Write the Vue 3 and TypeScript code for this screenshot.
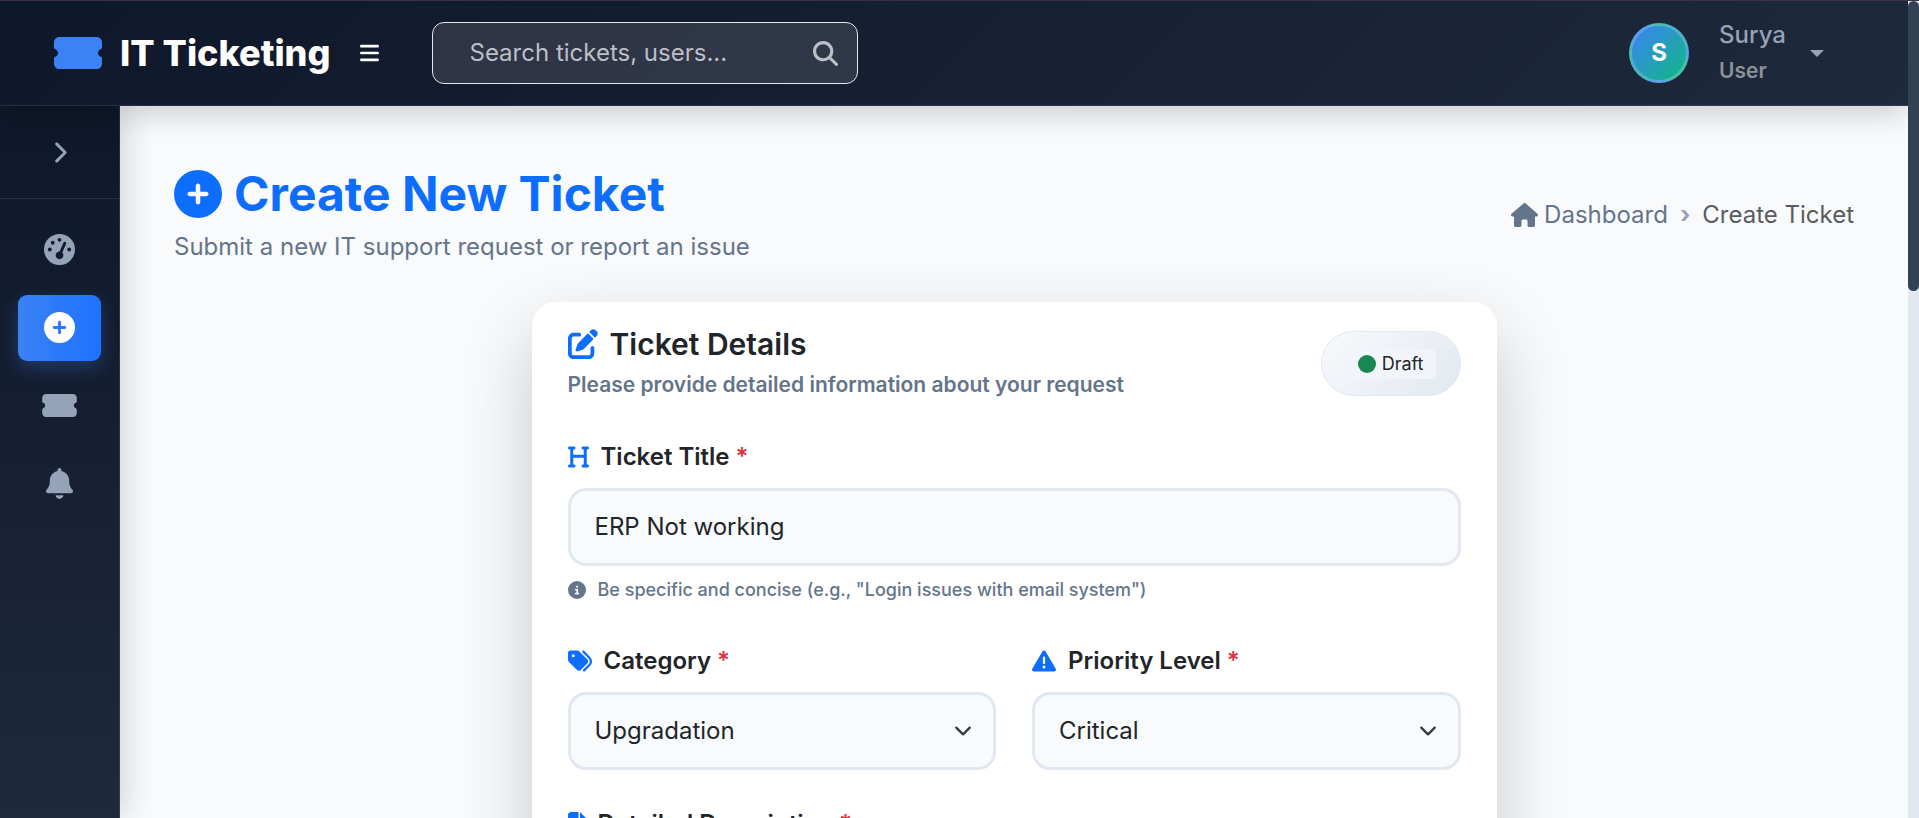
<script setup lang="ts">
import { ref } from 'vue'

interface Icon {
  box: string
  d: string
}

const icons: Record<string, Icon> = {
  ticket: {
    box: '0 64 576 384',
    d: 'M64 64C28.7 64 0 92.7 0 128v64c0 8.8 7.4 15.7 15.7 18.6C34.5 217.1 48 235 48 256s-13.5 38.9-32.3 45.4C7.4 304.3 0 311.2 0 320v64c0 35.3 28.7 64 64 64H512c35.3 0 64-28.7 64-64V320c0-8.8-7.4-15.7-15.7-18.6C541.5 294.9 528 277 528 256s13.5-38.9 32.3-45.4c8.3-2.9 15.7-9.8 15.7-18.6V128c0-35.3-28.7-64-64-64H64z',
  },
  bars: {
    box: '0 0 448 512',
    d: 'M0 96C0 78.3 14.3 64 32 64H416c17.7 0 32 14.3 32 32s-14.3 32-32 32H32C14.3 128 0 113.7 0 96zM0 256c0-17.7 14.3-32 32-32H416c17.7 0 32 14.3 32 32s-14.3 32-32 32H32c-17.7 0-32-14.3-32-32zM448 416c0 17.7-14.3 32-32 32H32c-17.7 0-32-14.3-32-32s14.3-32 32-32H416c17.7 0 32 14.3 32 32z',
  },
  search: {
    box: '0 0 512 512',
    d: 'M416 208c0 45.9-14.9 88.3-40 122.7L502.6 457.4c12.5 12.5 12.5 32.8 0 45.3s-32.8 12.5-45.3 0L330.7 376c-34.4 25.2-76.8 40-122.7 40C93.1 416 0 322.9 0 208S93.1 0 208 0S416 93.1 416 208zM208 352a144 144 0 1 0 0-288 144 144 0 1 0 0 288z',
  },
  plus: {
    box: '0 0 512 512',
    d: 'M256 512A256 256 0 1 0 256 0a256 256 0 1 0 0 512zM232 344V280H168c-13.3 0-24-10.7-24-24s10.7-24 24-24h64V168c0-13.3 10.7-24 24-24s24 10.7 24 24v64h64c13.3 0 24 10.7 24 24s-10.7 24-24 24H280v64c0 13.3-10.7 24-24 24s-24-10.7-24-24z',
  },
  gauge: {
    box: '0 0 512 512',
    d: 'M0 256a256 256 0 1 1 512 0A256 256 0 1 1 0 256zM288 96a32 32 0 1 0 -64 0 32 32 0 1 0 64 0zM256 416c35.3 0 64-28.7 64-64c0-17.4-6.9-33.1-18.1-44.6L366 161.7c5.3-12.1-.2-26.3-12.3-31.6s-26.3 .2-31.6 12.3L257.9 288c-.6 0-1.3 0-1.9 0c-35.3 0-64 28.7-64 64s28.7 64 64 64zM176 144a32 32 0 1 0 -64 0 32 32 0 1 0 64 0zM96 288a32 32 0 1 0 0-64 32 32 0 1 0 0 64zm352-32a32 32 0 1 0 -64 0 32 32 0 1 0 64 0z',
  },
  bell: {
    box: '0 0 448 512',
    d: 'M224 0c-17.7 0-32 14.3-32 32V51.2C119 66 64 130.6 64 208v18.8c0 47-17.3 92.4-48.5 127.6l-7.4 8.3c-8.4 9.4-10.4 22.9-5.3 34.4S19.4 416 32 416H416c12.6 0 24-7.4 29.2-18.9s3.1-25-5.3-34.4l-7.4-8.3C401.3 319.2 384 273.9 384 226.8V208c0-77.4-55-142-128-156.8V32c0-17.7-14.3-32-32-32zm45.3 493.3c12-12 18.7-28.3 18.7-45.3H224 160c0 17 6.7 33.3 18.7 45.3s28.3 18.7 45.3 18.7s33.3-6.7 45.3-18.7z',
  },
  chevron: {
    box: '0 0 320 512',
    d: 'M310.6 233.4c12.5 12.5 12.5 32.8 0 45.3l-192 192c-12.5 12.5-32.8 12.5-45.3 0s-12.5-32.8 0-45.3L242.7 256 73.4 86.6c-12.5-12.5-12.5-32.8 0-45.3s32.8-12.5 45.3 0l192 192z',
  },
  home: {
    box: '0 0 576 512',
    d: 'M575.8 255.5c0 18-15 32.1-32 32.1h-32l.7 160.2c0 2.7-.2 5.4-.5 8.1V472c0 22.1-17.9 40-40 40H456c-1.1 0-2.2 0-3.3-.1c-1.4 .1-2.8 .1-4.2 .1H416 392c-22.1 0-40-17.9-40-40V448 384c0-17.7-14.3-32-32-32H256c-17.7 0-32 14.3-32 32v64 24c0 22.1-17.9 40-40 40H160 128.1c-1.5 0-3-.1-4.5-.2c-1.2 .1-2.4 .2-3.6 .2H104c-22.1 0-40-17.9-40-40V360c0-.9 0-1.9 .1-2.8V287.6H32c-18 0-32-14-32-32.1c0-9 3-17 10-24L266.4 8c7-7 15-8 22-8s15 2 21 7L564.8 231.5c8 7 12 15 11 24z',
  },
  edit: {
    box: '0 0 512 512',
    d: 'M471.6 21.7c-21.9-21.9-57.3-21.9-79.2 0L362.3 51.7l97.9 97.9 30.1-30.1c21.9-21.9 21.9-57.3 0-79.2L471.6 21.7zm-299.2 220c-6.1 6.1-10.8 13.6-13.5 21.9l-29.6 88.8c-2.9 8.6-.6 18.1 5.8 24.6s15.9 8.7 24.6 5.8l88.8-29.6c8.2-2.7 15.7-7.4 21.9-13.5L437.7 172.3 339.7 74.3 172.4 241.7zM96 64C43 64 0 107 0 160V416c0 53 43 96 96 96H352c53 0 96-43 96-96V320c0-17.7-14.3-32-32-32s-32 14.3-32 32v96c0 17.7-14.3 32-32 32H96c-17.7 0-32-14.3-32-32V160c0-17.7 14.3-32 32-32h96c17.7 0 32-14.3 32-32s-14.3-32-32-32H96z',
  },
  heading: {
    box: '0 0 448 512',
    d: 'M0 64C0 46.3 14.3 32 32 32H80h48c17.7 0 32 14.3 32 32s-14.3 32-32 32H112V208H336V96H320c-17.7 0-32-14.3-32-32s14.3-32 32-32h48 48c17.7 0 32 14.3 32 32s-14.3 32-32 32H400V240 416h16c17.7 0 32 14.3 32 32s-14.3 32-32 32H368 320c-17.7 0-32-14.3-32-32s14.3-32 32-32h16V272H112V416h16c17.7 0 32 14.3 32 32s-14.3 32-32 32H80 32c-17.7 0-32-14.3-32-32s14.3-32 32-32H48V240 96H32C14.3 96 0 81.7 0 64z',
  },
  info: {
    box: '0 0 512 512',
    d: 'M256 512A256 256 0 1 0 256 0a256 256 0 1 0 0 512zM216 336h24V272H216c-13.3 0-24-10.7-24-24s10.7-24 24-24h48c13.3 0 24 10.7 24 24v88h8c13.3 0 24 10.7 24 24s-10.7 24-24 24H216c-13.3 0-24-10.7-24-24s10.7-24 24-24zm40-208a32 32 0 1 1 0 64 32 32 0 1 1 0-64z',
  },
  tags: {
    box: '0 0 512 512',
    d: 'M345 39.1L472.8 168.4c52.4 53 52.4 138.2 0 191.2L360.8 472.9c-9.3 9.4-24.5 9.5-33.9 .2s-9.5-24.5-.2-33.9L438.6 325.9c33.9-34.3 33.9-89.4 0-123.7L310.9 72.9c-9.3-9.4-9.2-24.6 .2-33.9s24.6-9.2 33.9 .2zM0 229.5V80C0 53.5 21.5 32 48 32H197.5c17 0 33.3 6.7 45.3 18.7l168 168c25 25 25 65.5 0 90.5L277.3 442.7c-25 25-65.5 25-90.5 0l-168-168C6.7 262.7 0 246.5 0 229.5zM144 144a32 32 0 1 0 -64 0 32 32 0 1 0 64 0z',
  },
  warning: {
    box: '0 0 512 512',
    d: 'M256 32c14.2 0 27.3 7.5 34.5 19.8l216 368c7.3 12.4 7.3 27.7 .2 40.1S486.3 480 472 480H40c-14.3 0-27.6-7.7-34.7-20.1s-7-27.8 .2-40.1l216-368C228.7 39.5 241.8 32 256 32zm0 128c-13.3 0-24 10.7-24 24V296c0 13.3 10.7 24 24 24s24-10.7 24-24V184c0-13.3-10.7-24-24-24zm32 224a32 32 0 1 0 -64 0 32 32 0 1 0 64 0z',
  },
  file: {
    box: '0 0 384 512',
    d: 'M64 0C28.7 0 0 28.7 0 64V448c0 35.3 28.7 64 64 64H320c35.3 0 64-28.7 64-64V160H256c-17.7 0-32-14.3-32-32V0H64zM256 0V128H384L256 0zM112 256H272c8.8 0 16 7.2 16 16s-7.2 16-16 16H112c-8.8 0-16-7.2-16-16s7.2-16 16-16zm0 64H272c8.8 0 16 7.2 16 16s-7.2 16-16 16H112c-8.8 0-16-7.2-16-16s7.2-16 16-16zm0 64H272c8.8 0 16 7.2 16 16s-7.2 16-16 16H112c-8.8 0-16-7.2-16-16s7.2-16 16-16z',
  },
}

const navItems = [
  { icon: 'gauge', label: 'Dashboard', active: false },
  { icon: 'plus', label: 'Create Ticket', active: true },
  { icon: 'ticket', label: 'My Tickets', active: false },
  { icon: 'bell', label: 'Notifications', active: false },
]

const query = ref('')
const title = ref('ERP Not working')
const category = ref('Upgradation')
const priority = ref('Critical')
const description = ref('')
</script>

<template>
  <div class="page">
    <div class="shell">
      <header class="topbar">
        <a class="brand" href="#">
          <svg class="brand-icon" :viewBox="icons.ticket.box" aria-hidden="true"><path :d="icons.ticket.d" /></svg>
          <span class="brand-name">IT Ticketing</span>
        </a>
        <button class="menu-button" type="button" aria-label="Menu">
          <svg :viewBox="icons.bars.box" aria-hidden="true"><path :d="icons.bars.d" /></svg>
        </button>
        <form class="search" @submit.prevent>
          <input v-model="query" type="search" placeholder="Search tickets, users..." aria-label="Search tickets, users" />
          <button type="submit" aria-label="Search">
            <svg :viewBox="icons.search.box" aria-hidden="true"><path :d="icons.search.d" /></svg>
          </button>
        </form>
        <button class="profile" type="button">
          <span class="avatar">S</span>
          <span class="who">
            <span class="who-name">Surya</span>
            <span class="who-role">User</span>
          </span>
          <span class="caret"></span>
        </button>
      </header>

      <div class="body">
        <aside class="sidebar">
          <button class="expand" type="button" aria-label="Expand sidebar">
            <svg :viewBox="icons.chevron.box" aria-hidden="true"><path :d="icons.chevron.d" /></svg>
          </button>
          <nav class="nav">
            <a
              v-for="item in navItems"
              :key="item.label"
              href="#"
              :class="['nav-link', 'nav-' + item.icon, { active: item.active }]"
              :aria-label="item.label"
            >
              <svg :viewBox="icons[item.icon].box" aria-hidden="true"><path :d="icons[item.icon].d" /></svg>
            </a>
          </nav>
        </aside>

        <main class="main">
          <div class="page-head">
            <div>
              <h1>
                <svg :viewBox="icons.plus.box" aria-hidden="true"><path :d="icons.plus.d" /></svg>
                <span>Create New Ticket</span>
              </h1>
              <p>Submit a new IT support request or report an issue</p>
            </div>
            <nav class="crumbs" aria-label="Breadcrumb">
              <a href="#">
                <svg :viewBox="icons.home.box" aria-hidden="true"><path :d="icons.home.d" /></svg>
                <span>Dashboard</span>
              </a>
              <span class="crumb-sep">›</span>
              <span class="crumb-current">Create Ticket</span>
            </nav>
          </div>

          <div class="row">
            <div class="column">
              <section class="card">
                <div class="card-head">
                  <div>
                    <h2>
                      <svg :viewBox="icons.edit.box" aria-hidden="true"><path :d="icons.edit.d" /></svg>
                      <span>Ticket Details</span>
                    </h2>
                    <p>Please provide detailed information about your request</p>
                  </div>
                  <div class="status">
                    <span class="status-badge"><span class="status-dot"></span>Draft</span>
                  </div>
                </div>

                <form class="fields" @submit.prevent>
                  <div class="field">
                    <label for="ticket-title">
                      <svg class="icon-heading" :viewBox="icons.heading.box" aria-hidden="true"><path :d="icons.heading.d" /></svg>
                      <span>Ticket Title <em>*</em></span>
                    </label>
                    <input id="ticket-title" v-model="title" class="control" type="text" />
                    <p class="hint">
                      <svg :viewBox="icons.info.box" aria-hidden="true"><path :d="icons.info.d" /></svg>
                      <span>Be specific and concise (e.g., "Login issues with email system")</span>
                    </p>
                  </div>

                  <div class="pair">
                    <div class="field">
                      <label for="category">
                        <svg :viewBox="icons.tags.box" aria-hidden="true"><path :d="icons.tags.d" /></svg>
                        <span>Category <em>*</em></span>
                      </label>
                      <div class="select">
                        <select id="category" v-model="category" class="control">
                          <option>Upgradation</option>
                        </select>
                        <svg viewBox="0 0 16 16" aria-hidden="true"><path d="m2 5 6 6 6-6" /></svg>
                      </div>
                    </div>
                    <div class="field">
                      <label for="priority">
                        <svg :viewBox="icons.warning.box" aria-hidden="true"><path :d="icons.warning.d" /></svg>
                        <span>Priority Level <em>*</em></span>
                      </label>
                      <div class="select">
                        <select id="priority" v-model="priority" class="control">
                          <option>Critical</option>
                        </select>
                        <svg viewBox="0 0 16 16" aria-hidden="true"><path d="m2 5 6 6 6-6" /></svg>
                      </div>
                    </div>
                  </div>

                  <div class="field">
                    <label for="description">
                      <svg class="icon-file" :viewBox="icons.file.box" aria-hidden="true"><path :d="icons.file.d" /></svg>
                      <span>Detailed Description <em>*</em></span>
                    </label>
                    <textarea id="description" v-model="description" class="control" rows="6"></textarea>
                  </div>
                </form>
              </section>
            </div>
          </div>
        </main>
      </div>
    </div>
    <div class="scroll-track" aria-hidden="true"><div class="scroll-thumb"></div></div>
  </div>
</template>

<style>
body {
  margin: 0;
  background: #f8fafc;
}
</style>

<style scoped>
.page,
.page * {
  box-sizing: border-box;
}

.page {
  display: flex;
  height: 100vh;
  overflow: hidden;
  border-top: 1px solid #3a3147;
  font-family: Inter, 'Liberation Sans', sans-serif;
  font-size: 24px;
  line-height: 36px;
  color: #212529;
}

h1,
h2,
p {
  margin: 0;
}

button,
input,
select,
textarea {
  font: inherit;
  color: inherit;
  margin: 0;
}

button {
  padding: 0;
  border: 0;
  background: none;
  cursor: pointer;
}

a {
  color: inherit;
  text-decoration: none;
}

svg {
  display: block;
  flex: none;
  fill: currentColor;
}

.shell {
  flex: 1;
  min-width: 0;
  display: flex;
  flex-direction: column;
  overflow: hidden;
}

/* Top bar */
.topbar {
  position: relative;
  z-index: 3;
  flex: none;
  height: 105px;
  display: flex;
  align-items: center;
  padding: 0 84px 0 54px;
  background: linear-gradient(135deg, #0f172a 0%, #1e293b 100%);
  border-bottom: 1px solid rgba(255, 255, 255, 0.1);
  box-shadow: 0 6px 30px rgba(0, 0, 0, 0.2);
  color: #fff;
}

.brand {
  display: flex;
  align-items: center;
  gap: 18px;
}

.brand-icon {
  width: 48px;
  height: 32px;
  color: #3b82f6;
}

.brand-name {
  font-size: 36px;
  line-height: 54px;
  font-weight: 800;
  white-space: nowrap;
}

.menu-button {
  margin-left: 30px;
}

.menu-button svg {
  width: 19px;
  height: 22px;
}

.search {
  flex: 0 1 426px;
  min-width: 0;
  display: flex;
  align-items: center;
  height: 62px;
  margin-left: 53px;
  padding: 0 19px 0 36px;
  border: 1px solid #e2e8f0;
  border-radius: 12px;
  background: linear-gradient(135deg, #2f3346, #2f3848);
}

.search input {
  flex: 1;
  min-width: 0;
  padding: 0;
  border: 0;
  outline: 0;
  background: none;
  appearance: none;
}

.search input::placeholder {
  color: #bdbfc6;
  opacity: 1;
}

.search button {
  color: #bdbfc6;
}

.search button svg {
  width: 25px;
  height: 25px;
}

.profile {
  display: flex;
  align-items: center;
  margin-left: auto;
  text-align: left;
}

.avatar {
  display: flex;
  align-items: center;
  justify-content: center;
  width: 60px;
  height: 60px;
  margin-right: 30px;
  border: 3px solid rgba(255, 255, 255, 0.2);
  border-radius: 50%;
  background: linear-gradient(135deg, #3b82f6, #10b981);
  font-weight: 700;
}

.who {
  display: flex;
  flex-direction: column;
  font-weight: 500;
}

.who-name {
  color: #94a3b8;
}

.who-role {
  font-size: 21px;
  font-weight: 600;
  color: #8e9197;
}

.caret {
  margin-left: 24px;
  border: 7px solid transparent;
  border-top-color: #94a3b8;
  border-bottom: 0;
}

/* Sidebar */
.body {
  flex: 1;
  min-height: 0;
  display: flex;
}

.sidebar {
  position: relative;
  z-index: 2;
  flex: none;
  width: 120px;
  background: linear-gradient(180deg, #0f172a 0%, #1e293b 100%);
  border-right: 1px solid rgba(255, 255, 255, 0.1);
  box-shadow: 6px 0 30px rgba(0, 0, 0, 0.15);
  color: #94a3b8;
}

.expand {
  display: flex;
  align-items: center;
  justify-content: center;
  width: 100%;
  height: 93px;
  border-bottom: 1px solid rgba(255, 255, 255, 0.1);
}

.expand svg {
  width: 15px;
  height: 23px;
}

.nav {
  display: flex;
  flex-direction: column;
  gap: 12px;
  padding: 18px;
}

.nav-link {
  display: flex;
  align-items: center;
  justify-content: center;
  height: 66px;
  padding-bottom: 2px;
  border-radius: 9px;
}

.nav-link.active {
  background: linear-gradient(90deg, #3b82f6, #1d72ff);
  box-shadow: 0 6px 18px rgba(59, 130, 246, 0.3);
  color: #fff;
}

.nav-link svg {
  width: 31px;
  height: 31px;
}

.nav-ticket svg {
  width: 35px;
  height: 23px;
}

/* Main area */
.main {
  flex: 1;
  min-width: 0;
  padding: 59px 54px 0;
  background: #f8fafc;
  overflow: hidden;
}

.page-head {
  display: flex;
  align-items: center;
  justify-content: space-between;
  color: #64748b;
}

h1 {
  display: flex;
  align-items: center;
  gap: 12px;
  margin-bottom: 6px;
  font-size: 48px;
  line-height: 58px;
  font-weight: 700;
  color: #0d6efd;
}

h1 svg {
  width: 48px;
  height: 48px;
}

.crumbs {
  display: flex;
  align-items: center;
  gap: 12px;
}

.crumbs a {
  display: flex;
  align-items: center;
  gap: 6px;
}

.crumbs svg {
  width: 27px;
  height: 24px;
}

.crumb-sep {
  color: #94a3b8;
  font-weight: 700;
}

.crumb-current {
  color: #595c5f;
}

.row {
  display: flex;
  justify-content: center;
  margin: 37px -18px 0;
}

.column {
  flex: 0 0 auto;
  width: calc(100% * 7 / 12);
  padding: 0 18px;
}

/* Card */
.card {
  padding: 24px 36px 36px;
  border-radius: 24px;
  background: #fff;
  box-shadow: 0 30px 75px rgba(0, 0, 0, 0.2);
}

.card-head {
  display: flex;
  align-items: center;
  justify-content: space-between;
  margin-bottom: 38px;
}

.card-head p {
  font-size: 21px;
  line-height: 33px;
  font-weight: 600;
  color: #64748b;
}

h2 {
  display: flex;
  align-items: center;
  gap: 12px;
  margin-bottom: 6px;
  font-size: 30px;
  line-height: 36px;
  font-weight: 600;
}

h2 svg {
  width: 30px;
  height: 30px;
  color: #0d6efd;
}

.status {
  padding: 17px 24px 16px;
  border: 1px solid #e2e8f0;
  border-radius: 36px;
  background: linear-gradient(135deg, #f8fafc, #e2e8f0);
}

.status-badge {
  display: flex;
  align-items: center;
  gap: 6px;
  padding: 0 12px;
  border-radius: 6px;
  background: #f1f5f9;
  font-size: 18px;
  line-height: 30px;
}

.status-dot {
  width: 18px;
  height: 18px;
  border-radius: 50%;
  background: #198754;
}

.fields {
  display: flex;
  flex-direction: column;
  gap: 36px;
}

.pair {
  display: grid;
  grid-template-columns: 1fr 1fr;
  gap: 36px;
}

.field label {
  display: flex;
  align-items: center;
  gap: 12px;
  margin-bottom: 13px;
  font-weight: 600;
}

.field label svg {
  width: 24px;
  height: 24px;
  color: #0d6efd;
}

.field label .icon-heading {
  width: 21px;
}

.field label .icon-file {
  width: 18px;
}

.field label em {
  font-style: normal;
  color: #dc3545;
}

.control {
  display: block;
  width: 100%;
  padding: 18px 24px;
  border: 3px solid #e2e8f0;
  border-radius: 18px;
  background: #f8fafc;
  outline: 0;
}

input.control,
select.control {
  height: 78px;
}

input.control {
  padding-top: 16px;
}

.select {
  display: grid;
  align-items: center;
}

.select select,
.select svg {
  grid-area: 1 / 1;
}

.select select {
  appearance: none;
  padding-right: 54px;
}

.select svg {
  justify-self: end;
  width: 18px;
  height: 18px;
  margin-right: 24px;
  fill: none;
  stroke: #343a40;
  stroke-width: 2;
  stroke-linecap: round;
  stroke-linejoin: round;
  pointer-events: none;
}

.hint {
  display: flex;
  align-items: center;
  gap: 12px;
  margin-top: 6px;
  font-size: 18px;
  line-height: 35px;
  font-weight: 500;
  color: #64748b;
}

.hint svg {
  width: 18px;
  height: 18px;
}

/* Scroll indicator */
.scroll-track {
  flex: none;
  width: 11px;
  background: #e2e8f0;
}

.scroll-thumb {
  height: 290px;
  border-radius: 6px;
  background: #334155;
}
</style>
